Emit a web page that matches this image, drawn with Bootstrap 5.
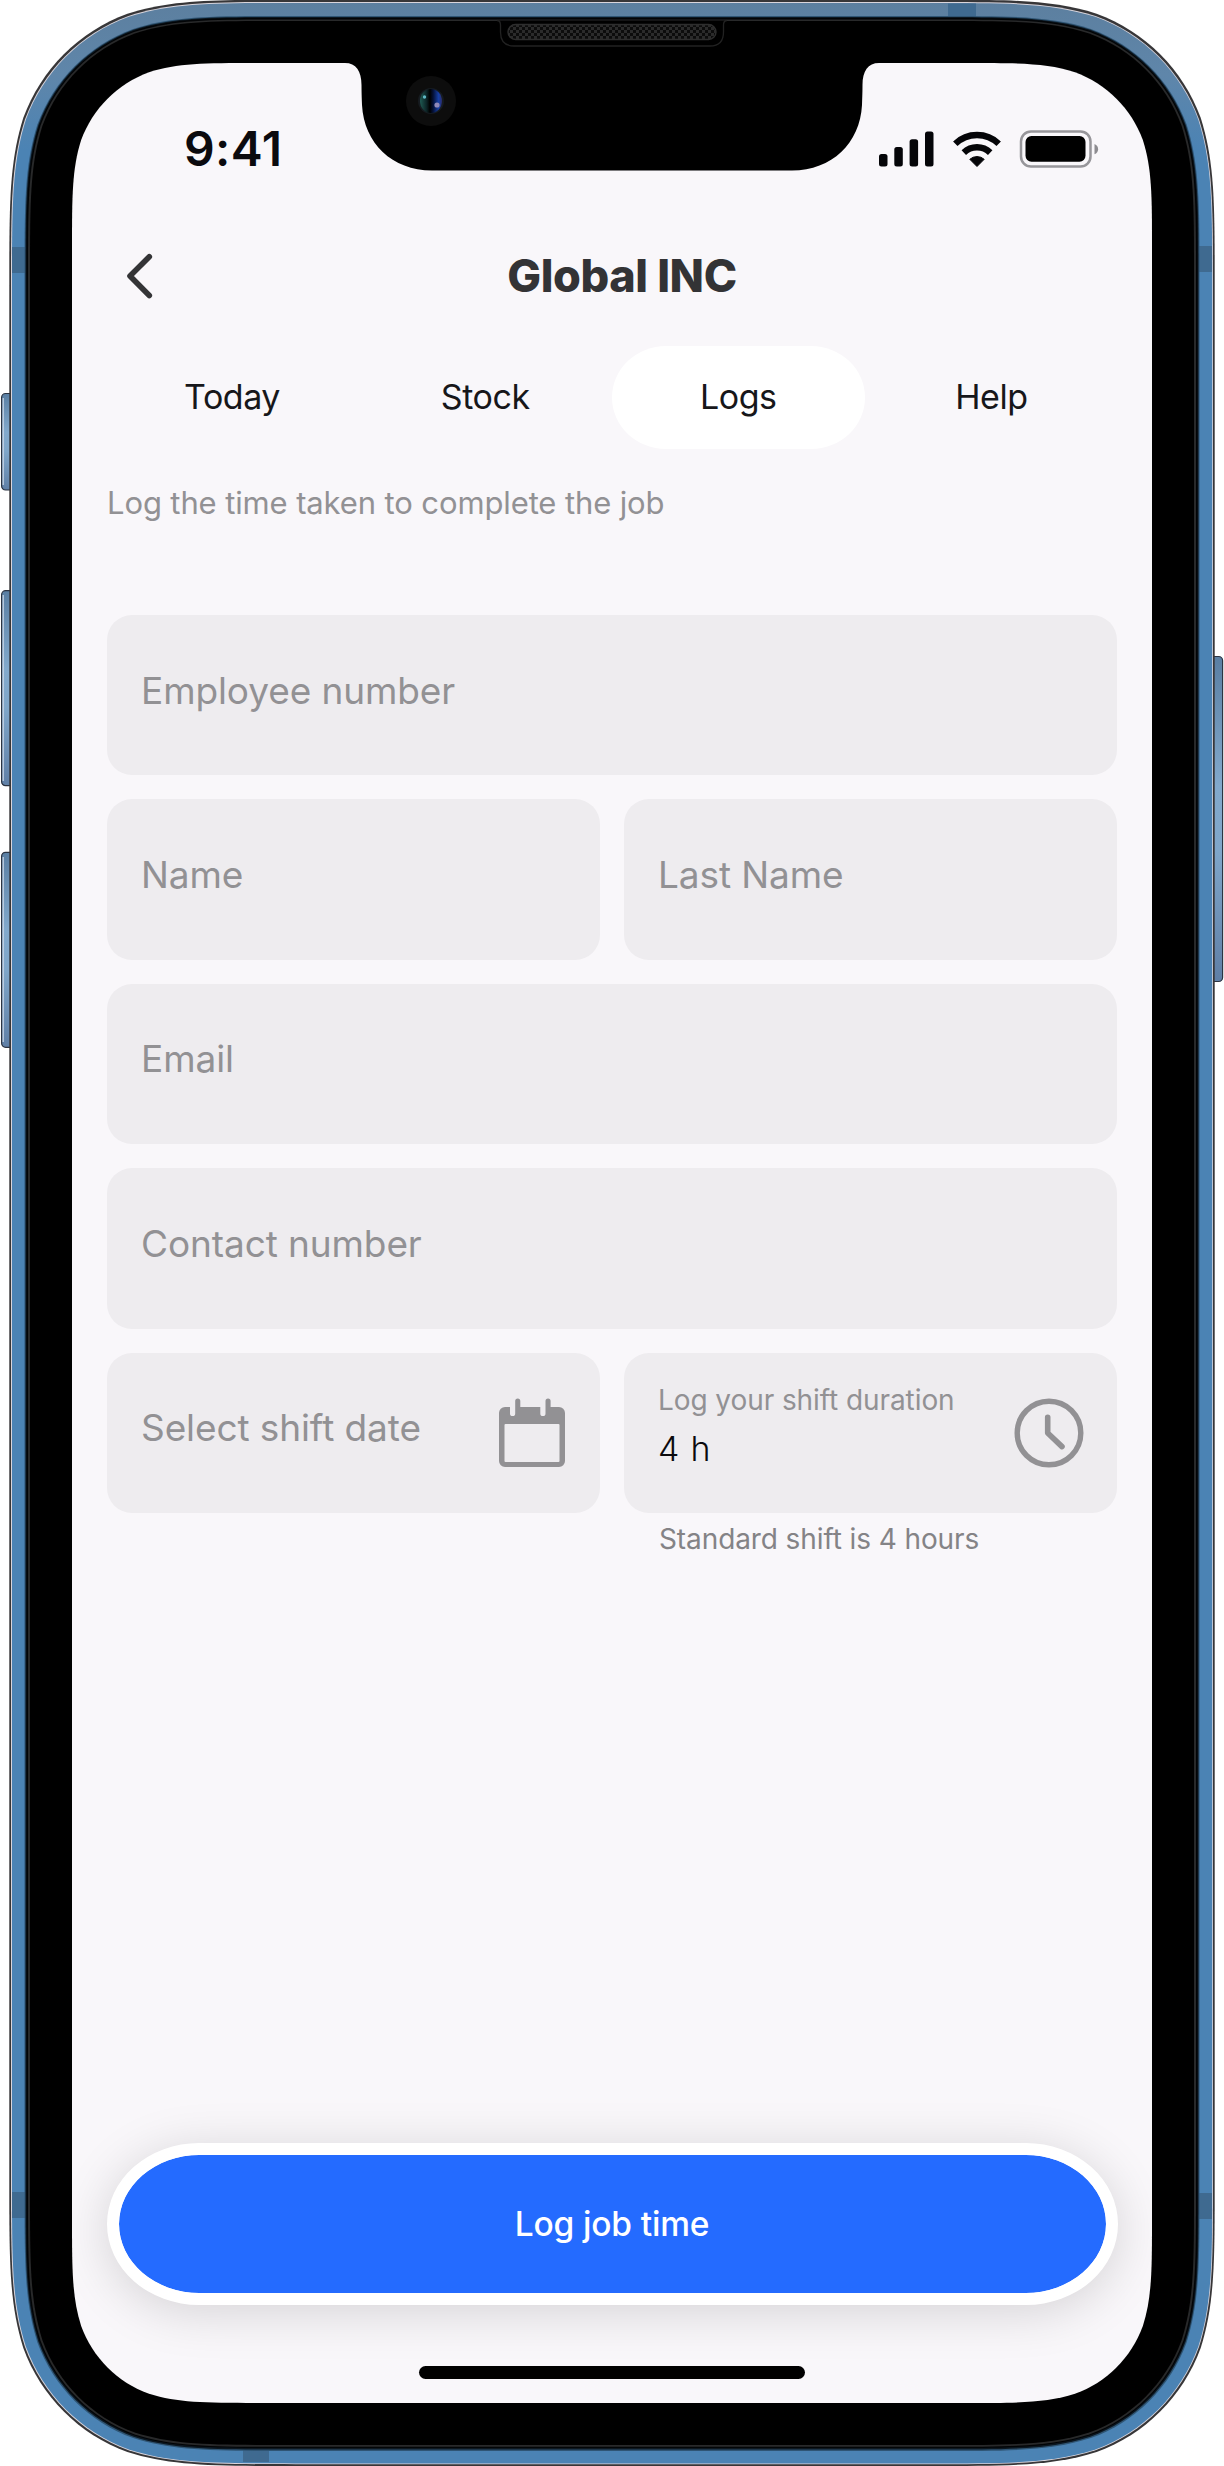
<!DOCTYPE html>
<html lang="en">
<head>
<meta charset="utf-8">
<meta name="viewport" content="width=device-width, initial-scale=1">
<title>Global INC – Logs</title>
<link href="https://cdn.jsdelivr.net/npm/bootstrap@5.3.0/dist/css/bootstrap.min.css" rel="stylesheet">
<style>
  body { width: 1224px; height: 2466px; background: #fff; overflow: hidden; font-family: Inter, "Liberation Sans", sans-serif; }
  .device { width: 1224px; height: 2466px; }
  .device-art { left: 0; top: 0; z-index: 0; }
  .app-screen { z-index: 1; margin: 0 72px; height: 2466px; padding-top: 98px; }
  .status-bar { height: 101px; padding: 0 53px 0 112px; }
  .clock-text { font-size: 48px; font-weight: 600; color: #0b0a0e; line-height: 101px; letter-spacing: .4px; }
  .app-header { height: 100px; margin-top: 27px; padding: 0 72px 0 42px; }
  .back-btn { width: 50px; height: 100px; border: 0; padding: 0 0 0 9px; }
  .app-title { font-size: 45px; font-weight: 800; letter-spacing: -.4px; line-height: 100px; color: #333335; }
  .tab-row { margin: 20px 34px 0 33.5px; height: 103px; }
  .tab-row .nav-link { height: 103px; line-height: 101px; padding: 0; font-size: 34px; letter-spacing: -.45px; color: #17171a; border-radius: 54px / 51.5px; }
  .tab-row .nav-link.active { background: #fff; color: #17171a; }
  .hint-text { margin: 34px 35px 0; line-height: 40px; font-size: 31px; letter-spacing: -.12px; color: #929194; }
  .log-form { margin: 92px 35px 0 35px; gap: 24px; }
  .field-row { gap: 24px; }
  .field-box { height: 160.4px; border-radius: 25px; background: #eeecef; padding: 0 33px 0 34px; flex: 1 1 0; min-width: 0; }
  .field-box .form-control { border: 0; background: transparent; padding: 0 0 10px; height: 100%; min-width: 0; font-size: 37px; letter-spacing: -.1px; color: #17171a; box-shadow: none; border-radius: 0; }
  .field-box .form-control::placeholder { color: #929194; opacity: 1; }
  .field-box svg { flex: none; }
  .duration-label { font-size: 28px; line-height: 40px; letter-spacing: -.08px; color: #929194; white-space: nowrap; }
  .field-box .duration-input { font-size: 34px; font-weight: 300; letter-spacing: .8px; height: 48px; line-height: 48px; margin-top: 5px; padding: 0; color: #0b0a0e; }
  .duration-stack { padding-top: 27px; }
  .help-line { font-size: 28px; line-height: 40px; letter-spacing: -.1px; color: #848386; padding-left: 552px; margin-top: -18px; }
  .submit-btn { width: 1011px; height: 162px; margin: auto 34px 61px 34.5px; padding: 0; border: 12px solid #fff; border-radius: 92px / 81px; background: #246bff; background-clip: padding-box; color: #fff; font-size: 33.5px; font-weight: 500; letter-spacing: -.15px; box-shadow: 0 7px 50px rgba(0,0,0,.15); }
  .submit-btn:hover { background-color: #246bff; border-color: #fff; color: #fff; }
  .home-bar { width: 386px; height: 13px; border-radius: 7px; background: #000; margin: 0 auto 87px; }
</style>
</head>
<body>
<div class="device position-relative">
  <svg class="device-art position-absolute" width="1224" height="2466" viewBox="0 0 1224 2466" aria-hidden="true">
    <defs>
      <linearGradient id="frameBlue" gradientUnits="userSpaceOnUse" x1="0" y1="0" x2="0" y2="150">
        <stop offset="0" stop-color="#5c7f9f"/><stop offset=".5" stop-color="#5f86aa"/><stop offset="1" stop-color="#4b83b4"/>
      </linearGradient>
      <linearGradient id="keyBlue" x1="0" x2="0" y1="0" y2="1">
        <stop offset="0" stop-color="#5a7fa3"/><stop offset=".4" stop-color="#82a9cc"/><stop offset=".6" stop-color="#7fa6c9"/><stop offset="1" stop-color="#5f7fa6"/>
      </linearGradient>
      <linearGradient id="lens" x1="0" x2="1" y1="0" y2="0">
        <stop offset="0" stop-color="#1f5a52"/><stop offset=".3" stop-color="#0c2426"/><stop offset=".45" stop-color="#000"/><stop offset=".6" stop-color="#04113a"/><stop offset=".85" stop-color="#1740a8"/><stop offset="1" stop-color="#2a2a66"/>
      </linearGradient>
      <pattern id="mesh" width="6" height="6" patternUnits="userSpaceOnUse">
        <rect width="6" height="6" fill="#0c0c0c"/><rect width="3" height="3" fill="#2b2b2b"/><rect x="3" y="3" width="3" height="3" fill="#2b2b2b"/>
      </pattern>
    </defs>
    <g stroke="#2c3442" stroke-width="1.2" fill="url(#keyBlue)">
      <rect x="1.6" y="393.5" width="14" height="96.5" rx="4"/>
      <rect x="1.6" y="590.7" width="14" height="195" rx="4"/>
      <rect x="1.6" y="852.3" width="14" height="195" rx="4"/>
      <rect x="1208" y="656.5" width="14.6" height="325" rx="4"/>
    </g>
    <path d="M3.2 398V485M3.2 595V781M3.2 857V1042" stroke="#cdd9e8" stroke-width="1.2"/>
    <path data-box="9.3 -.3 1214.7 2466" data-r="187" fill="#373638"/>
    <path data-box="11 2 1213 2464.2" data-r="186" fill="#d9d5dc"/>
    <path data-box="12 3 1212.2 2463.4" data-r="185" fill="url(#frameBlue)"/>
    <g fill="#3f6a90">
      <rect x="12" y="247" width="15" height="26"/><rect x="12" y="2192" width="15" height="26"/>
      <rect x="1197" y="246" width="15" height="26"/><rect x="1197" y="2193" width="15" height="26"/>
      <rect x="948" y="3.5" width="28" height="15"/><rect x="243" y="2448" width="26" height="14"/>
    </g>
    <path data-box="24.5 16 1199.5 2451" data-r="172" fill="#2f5574"/>
    <path data-box="25.5 17 1198.5 2449.5" data-r="171" fill="#0c1720"/>
    <path data-box="26.5 18 1197.5 2448" data-r="170" fill="#020406"/>
    <path data-box="28 19.5 1196 2446.8" data-r="168" fill="#28292a"/>
    <path data-box="30 21 1194 2445" data-r="166" fill="#000"/>
    <path d="M497 20.5Q500.5 20.5 500.5 25V32Q500.5 46 514 46H710Q723.5 46 723.5 32V25Q723.5 20.5 727 20.5" fill="#000" stroke="#222" stroke-width="1.3"/>
    <rect x="508" y="24.5" width="208" height="15" rx="7.5" fill="url(#mesh)" stroke="#2e2e2e" stroke-width="1.4"/>
    <path data-box="72 63 1152 2403" data-r="122" fill="#f9f7fa"/>
    <path d="M340 60V63H345C356 63 361.5 71 361.5 85C361.5 93 361.8 99 362 105C364 143 392 170.5 432 170.5H792C832 170.5 860 143 862 105C862.2 99 862.5 93 862.5 85C862.5 71 868 63 879 63H884V60Z" fill="#000"/>
    <circle cx="431" cy="101" r="25" fill="#0d0d0d"/>
    <circle cx="431" cy="101" r="13" fill="#161b20"/>
    <ellipse cx="431" cy="101" rx="11" ry="12" fill="url(#lens)"/>
    <circle cx="424.5" cy="97" r="1.7" fill="#5fb8c4"/><circle cx="437" cy="105" r="2.6" fill="#9088b8"/>
  </svg>

  <main class="app-screen position-relative d-flex flex-column">
    <div class="status-bar d-flex align-items-center justify-content-between">
      <span class="clock-text">9:41</span>
      <svg width="276" height="38" viewBox="823 129 276 38" aria-hidden="true">
        <g fill="#050508">
          <rect x="879" y="153" width="8.5" height="12.5" rx="2.5"/><rect x="894.3" y="146" width="8.5" height="19.5" rx="2.5"/><rect x="909.6" y="138.3" width="8.5" height="27.2" rx="2.5"/><rect x="925" y="130.5" width="8.5" height="35" rx="2.5"/>
          <path d="M977 165.5L969.8 158.3A10.8 10.8 0 0 1 984.2 158.3Z" stroke="#050508" stroke-width="1" stroke-linejoin="round"/>
        </g>
        <g fill="none" stroke="#050508" stroke-width="6.4">
          <path d="M963.8 151.6A19 19 0 0 1 990.2 151.6"/><path d="M955.3 142.8A31.3 31.3 0 0 1 998.7 142.8"/>
        </g>
        <rect x="1021" y="130.5" width="69.5" height="35" rx="10" fill="none" stroke="#97969a" stroke-width="2.5"/>
        <rect x="1025.5" y="135" width="60" height="25.8" rx="6" fill="#000"/>
        <path d="M1094.5 143C1099.3 144.8 1099.3 151.5 1094.5 153.3Z" fill="#8d8c90"/>
      </svg>
    </div>

    <header class="app-header d-flex align-items-center">
      <button type="button" class="btn back-btn text-start" aria-label="Back">
        <svg class="d-block" width="36" height="52" viewBox="124 250 36 52"><path d="M150.3 256.7L131 276L150.3 295.5" fill="none" stroke="#343436" stroke-width="5.6" stroke-linecap="round" stroke-linejoin="round"/></svg>
      </button>
      <h1 class="app-title flex-grow-1 text-center mb-0">Global INC</h1>
    </header>

    <ul class="nav nav-pills nav-fill tab-row">
      <li class="nav-item col-3"><a class="nav-link" href="#">Today</a></li>
      <li class="nav-item col-3"><a class="nav-link" href="#">Stock</a></li>
      <li class="nav-item col-3"><a class="nav-link active" aria-current="page" href="#">Logs</a></li>
      <li class="nav-item col-3"><a class="nav-link" href="#">Help</a></li>
    </ul>

    <p class="hint-text">Log the time taken to complete the job</p>

    <form class="log-form d-flex flex-column">
      <div class="field-row d-flex"><div class="field-box d-flex"><input class="form-control" placeholder="Employee number" aria-label="Employee number"></div></div>
      <div class="field-row d-flex">
        <div class="field-box d-flex"><input class="form-control" placeholder="Name" aria-label="Name"></div>
        <div class="field-box d-flex"><input class="form-control" placeholder="Last Name" aria-label="Last Name"></div>
      </div>
      <div class="field-row d-flex"><div class="field-box d-flex"><input class="form-control" placeholder="Email" aria-label="Email"></div></div>
      <div class="field-row d-flex"><div class="field-box d-flex"><input class="form-control" placeholder="Contact number" aria-label="Contact number"></div></div>
      <div class="field-row d-flex">
        <div class="field-box d-flex align-items-center">
          <input class="form-control" placeholder="Select shift date" aria-label="Select shift date">
          <svg width="70" height="70" viewBox="497 1398 70 70" aria-hidden="true">
            <path fill="#929194" fill-rule="evenodd" d="M505 1407H510V1413.5A2.6 2.6 0 0 0 515.2 1413.5V1401A2.5 2.5 0 0 1 520.3 1401V1407H540.3V1413.5A2.6 2.6 0 0 0 545.5 1413.5V1401A2.5 2.5 0 0 1 550.6 1401V1407H559A6 6 0 0 1 565 1413V1461A6 6 0 0 1 559 1467H505A6 6 0 0 1 499 1461V1413A6 6 0 0 1 505 1407ZM505.5 1424A1 1 0 0 0 504.5 1425V1461A1 1 0 0 0 505.5 1462H558.5A1 1 0 0 0 559.5 1461V1425A1 1 0 0 0 558.5 1424Z"/>
          </svg>
        </div>
        <div class="field-box d-flex align-items-center justify-content-between">
          <div class="duration-stack align-self-start">
            <label class="duration-label d-block" for="duration">Log your shift duration</label>
            <input id="duration" class="form-control duration-input" value="4 h">
          </div>
          <svg width="70" height="70" viewBox="1014.3 1397.7 70 70" fill="none" stroke="#929194" aria-hidden="true">
            <circle cx="1049.3" cy="1432.7" r="31.8" stroke-width="5.4"/><path d="M1048 1417V1432.7L1062.3 1446.3" stroke-width="5.6" stroke-linecap="round" stroke-linejoin="round"/>
          </svg>
        </div>
      </div>
      <div class="help-line">Standard shift is 4 hours</div>
    </form>

    <button type="button" class="btn submit-btn">Log job time</button>
    <div class="home-bar"></div>
  </main>
</div>
<script>
  // Rounded rectangles with continuous-curvature corners: data-box is "left top right bottom", data-r the radius.
  document.querySelectorAll('path[data-box]').forEach(p => {
    const [x0, y0, x1, y1] = p.dataset.box.split(' ').map(Number), r = +p.dataset.r;
    const a = 1.5287 * r, b = 1.0885 * r, c = .8684 * r, d = .6315 * r, e = .3728 * r, f = .1691 * r, g = .0749 * r;
    p.setAttribute('d', `M${x0 + a} ${y0}H${x1 - a}C${x1 - b} ${y0} ${x1 - c} ${y0} ${x1 - d} ${y0 + g}C${x1 - e} ${y0 + f} ${x1 - f} ${y0 + e} ${x1 - g} ${y0 + d}C${x1} ${y0 + c} ${x1} ${y0 + b} ${x1} ${y0 + a}` +
      `V${y1 - a}C${x1} ${y1 - b} ${x1} ${y1 - c} ${x1 - g} ${y1 - d}C${x1 - f} ${y1 - e} ${x1 - e} ${y1 - f} ${x1 - d} ${y1 - g}C${x1 - c} ${y1} ${x1 - b} ${y1} ${x1 - a} ${y1}` +
      `H${x0 + a}C${x0 + b} ${y1} ${x0 + c} ${y1} ${x0 + d} ${y1 - g}C${x0 + e} ${y1 - f} ${x0 + f} ${y1 - e} ${x0 + g} ${y1 - d}C${x0} ${y1 - c} ${x0} ${y1 - b} ${x0} ${y1 - a}` +
      `V${y0 + a}C${x0} ${y0 + b} ${x0} ${y0 + c} ${x0 + g} ${y0 + d}C${x0 + f} ${y0 + e} ${x0 + e} ${y0 + f} ${x0 + d} ${y0 + g}C${x0 + c} ${y0} ${x0 + b} ${y0} ${x0 + a} ${y0}Z`);
  });
</script>
<script src="https://cdn.jsdelivr.net/npm/bootstrap@5.3.0/dist/js/bootstrap.bundle.min.js"></script>
</body>
</html>
